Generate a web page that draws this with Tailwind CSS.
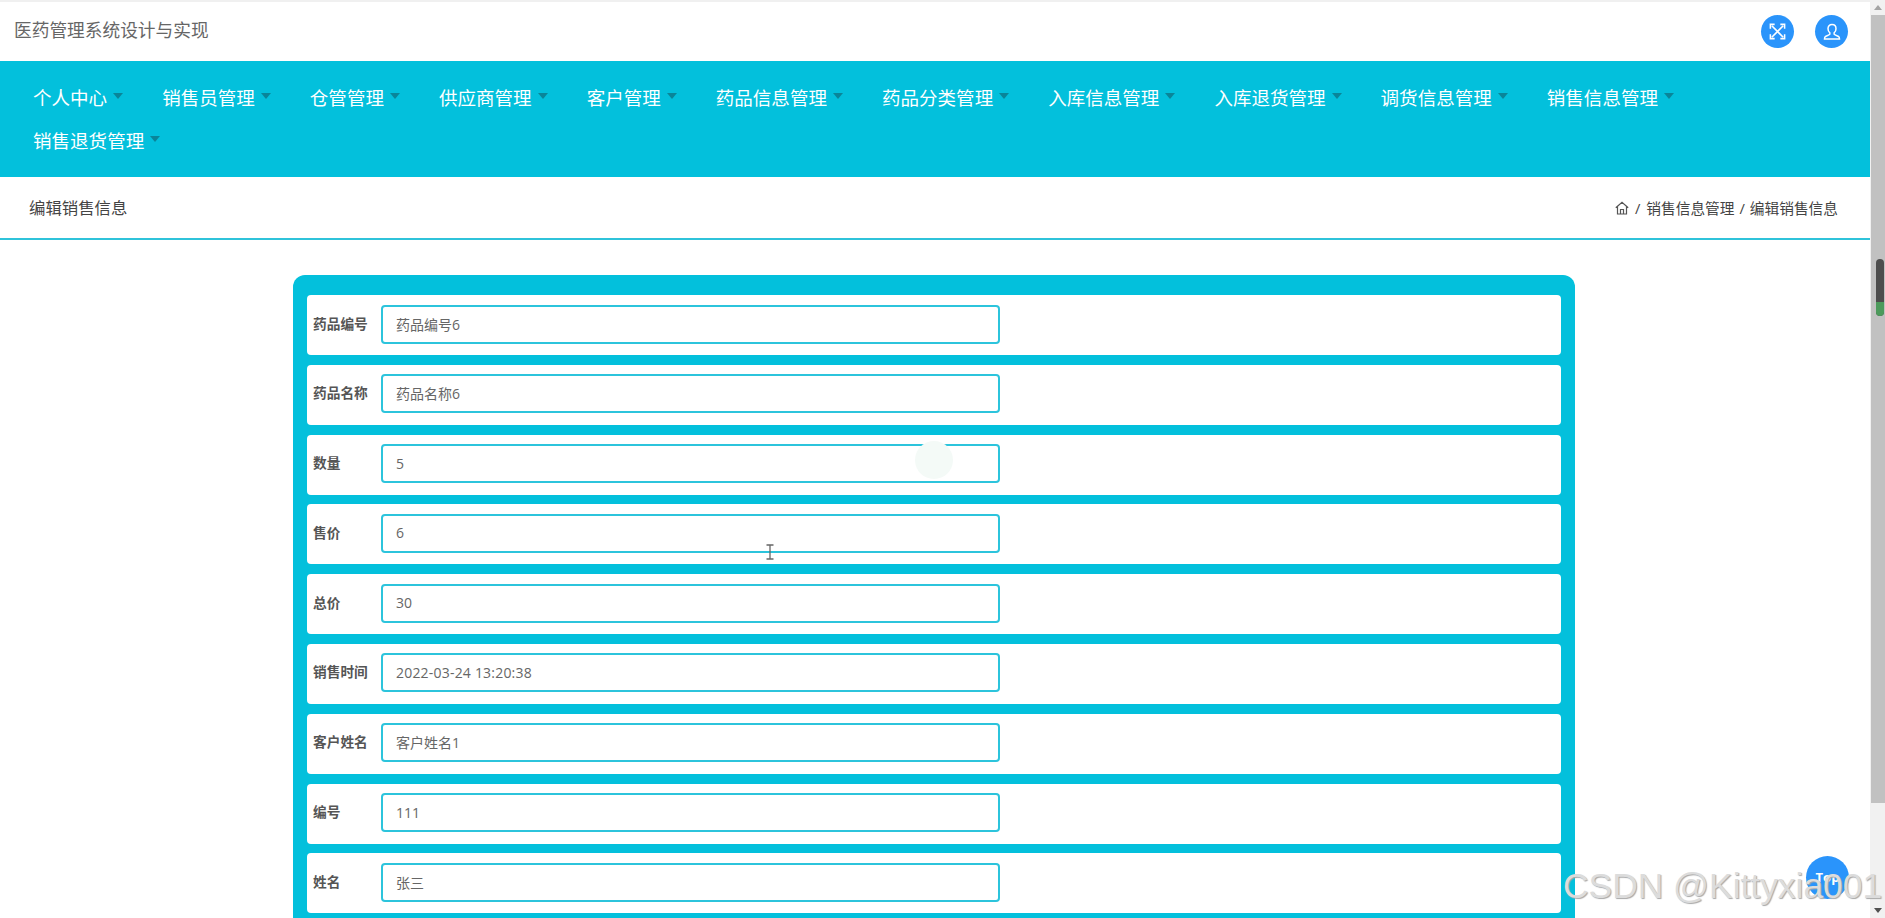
<!DOCTYPE html>
<html lang="zh-CN">
  <head>
    <meta charset="UTF-8" />
    <title>编辑销售信息</title>
    <script src="https://cdn.jsdelivr.net/npm/@tailwindcss/browser@4"></script>
  </head>
  <body class="bg-white font-['Open_Sans','Noto_Sans_CJK_SC',sans-serif]">
    <div class="relative flex h-[918px] overflow-hidden">
      <main class="flex-1 min-w-0">
        <!-- top bar -->
        <header class="h-[61px] border-t-2 border-[#f0f0f0] flex items-center justify-between pl-[14px] pr-[22px]">
          <span class="text-[17.7px] leading-[24px] mb-[3px] text-[#666]">医药管理系统设计与实现</span>
          <div class="flex items-center gap-[21px]">
            <button class="w-[33px] h-[33px] rounded-full bg-[#2a94fb] flex items-center justify-center">
              <svg class="w-[19px] h-[19px]" viewBox="0 0 20 20" fill="none" stroke="white" stroke-width="1.7">
                <path d="M4 4l12 12M16 4L4 16" />
                <path d="M2.5 7V2.5H7M13 2.5h4.5V7M2.5 13v4.5H7M17.5 13v4.5H13" stroke-width="1.6" />
              </svg>
            </button>
            <button class="w-[33px] h-[33px] rounded-full bg-[#2a94fb] flex items-center justify-center">
              <svg class="w-[20px] h-[20px]" viewBox="0 0 20 20" fill="none" stroke="white" stroke-width="1.5">
                <path d="M10 2.5c-2.6 0-4 1.9-4 4.2 0 1.800.8 3.300 1.900 4.200.3.900-.1 1.600-1 2L3.500 14.500c-.8.400-1 1-1 2.500h15c0-1.500-.2-2.100-1-2.500l-3.400-1.600c-.9-.4-1.300-1.100-1-2 1.100-.9 1.900-2.400 1.900-4.200 0-2.300-1.400-4.200-4-4.200z" />
              </svg>
            </button>
          </div>
        </header>

        <!-- main menu -->
        <nav class="h-[116px] bg-[#03c0dc] flex flex-wrap content-start gap-x-[39px] pt-[15px] pl-[33px] pr-[170px] text-[18.55px] leading-[43px] text-white">
          <a class="flex items-center">个人中心<i class="ml-[6px] mb-[3px] border-x-[5.5px] border-t-[6px] border-x-transparent border-t-[#0a8599]"></i></a>
          <a class="flex items-center">销售员管理<i class="ml-[6px] mb-[3px] border-x-[5.5px] border-t-[6px] border-x-transparent border-t-[#0a8599]"></i></a>
          <a class="flex items-center">仓管管理<i class="ml-[6px] mb-[3px] border-x-[5.5px] border-t-[6px] border-x-transparent border-t-[#0a8599]"></i></a>
          <a class="flex items-center">供应商管理<i class="ml-[6px] mb-[3px] border-x-[5.5px] border-t-[6px] border-x-transparent border-t-[#0a8599]"></i></a>
          <a class="flex items-center">客户管理<i class="ml-[6px] mb-[3px] border-x-[5.5px] border-t-[6px] border-x-transparent border-t-[#0a8599]"></i></a>
          <a class="flex items-center">药品信息管理<i class="ml-[6px] mb-[3px] border-x-[5.5px] border-t-[6px] border-x-transparent border-t-[#0a8599]"></i></a>
          <a class="flex items-center">药品分类管理<i class="ml-[6px] mb-[3px] border-x-[5.5px] border-t-[6px] border-x-transparent border-t-[#0a8599]"></i></a>
          <a class="flex items-center">入库信息管理<i class="ml-[6px] mb-[3px] border-x-[5.5px] border-t-[6px] border-x-transparent border-t-[#0a8599]"></i></a>
          <a class="flex items-center">入库退货管理<i class="ml-[6px] mb-[3px] border-x-[5.5px] border-t-[6px] border-x-transparent border-t-[#0a8599]"></i></a>
          <a class="flex items-center">调货信息管理<i class="ml-[6px] mb-[3px] border-x-[5.5px] border-t-[6px] border-x-transparent border-t-[#0a8599]"></i></a>
          <a class="flex items-center">销售信息管理<i class="ml-[6px] mb-[3px] border-x-[5.5px] border-t-[6px] border-x-transparent border-t-[#0a8599]"></i></a>
          <a class="flex items-center">销售退货管理<i class="ml-[6px] mb-[3px] border-x-[5.5px] border-t-[6px] border-x-transparent border-t-[#0a8599]"></i></a>
        </nav>

        <!-- breadcrumb -->
        <div class="h-[63px] border-b-2 border-[#2fc3da] flex items-center justify-between pl-[29px] pr-[32px]">
          <span class="text-[16.4px] leading-[24px] mt-[1px] text-[#444]">编辑销售信息</span>
          <div class="flex items-center mt-[1px] text-[14.7px] leading-[20px] text-[#444]">
            <svg class="w-[14px] h-[14px]" viewBox="0 0 14 14" fill="none" stroke="#555" stroke-width="1.2">
              <path d="M.8 6.800L7 1.200l6.200 5.600M2.500 5.500v7.500h9V5.500M5.500 13V8.500h3V13" />
            </svg>
            <span class="mx-[6px]">/</span>
            <span>销售信息管理</span>
            <span class="mx-[5px]">/</span>
            <span>编辑销售信息</span>
          </div>
        </div>

        <!-- form card -->
        <form class="w-[1282px] ml-[293px] mt-[35px] bg-[#03c0dc] rounded-[12px] px-[14px] pt-[20px] pb-[20px] flex flex-col gap-[9.8px]">
          <div class="h-[60px] bg-white rounded-[4px] flex items-center pl-[6px] pb-[2px]">
            <label class="w-[68px] text-[13.7px] leading-[20px] mb-[1px] font-bold text-[#555]">药品编号</label>
            <input class="w-[619px] h-[39px] border-2 border-[#2cc4dc] rounded-[4px] px-[13px] pb-[1px] text-[14px] text-[#666]" value="药品编号6" />
          </div>
          <div class="h-[60px] bg-white rounded-[4px] flex items-center pl-[6px] pb-[2px]">
            <label class="w-[68px] text-[13.7px] leading-[20px] mb-[1px] font-bold text-[#555]">药品名称</label>
            <input class="w-[619px] h-[39px] border-2 border-[#2cc4dc] rounded-[4px] px-[13px] pb-[1px] text-[14px] text-[#666]" value="药品名称6" />
          </div>
          <div class="h-[60px] bg-white rounded-[4px] flex items-center pl-[6px] pb-[2px]">
            <label class="w-[68px] text-[13.7px] leading-[20px] mb-[1px] font-bold text-[#555]">数量</label>
            <input class="w-[619px] h-[39px] border-2 border-[#2cc4dc] rounded-[4px] px-[13px] pb-[1px] text-[14px] text-[#666]" value="5" />
          </div>
          <div class="h-[60px] bg-white rounded-[4px] flex items-center pl-[6px] pb-[2px]">
            <label class="w-[68px] text-[13.7px] leading-[20px] mb-[1px] font-bold text-[#555]">售价</label>
            <input class="w-[619px] h-[39px] border-2 border-[#2cc4dc] rounded-[4px] px-[13px] pb-[1px] text-[14px] text-[#666]" value="6" />
          </div>
          <div class="h-[60px] bg-white rounded-[4px] flex items-center pl-[6px] pb-[2px]">
            <label class="w-[68px] text-[13.7px] leading-[20px] mb-[1px] font-bold text-[#555]">总价</label>
            <input class="w-[619px] h-[39px] border-2 border-[#2cc4dc] rounded-[4px] px-[13px] pb-[1px] text-[14px] text-[#666]" value="30" />
          </div>
          <div class="h-[60px] bg-white rounded-[4px] flex items-center pl-[6px] pb-[2px]">
            <label class="w-[68px] text-[13.7px] leading-[20px] mb-[1px] font-bold text-[#555]">销售时间</label>
            <input class="w-[619px] h-[39px] border-2 border-[#2cc4dc] rounded-[4px] px-[13px] pb-[1px] text-[14px] tracking-[0.2px] text-[#666]" value="2022-03-24 13:20:38" />
          </div>
          <div class="h-[60px] bg-white rounded-[4px] flex items-center pl-[6px] pb-[2px]">
            <label class="w-[68px] text-[13.7px] leading-[20px] mb-[1px] font-bold text-[#555]">客户姓名</label>
            <input class="w-[619px] h-[39px] border-2 border-[#2cc4dc] rounded-[4px] px-[13px] pb-[1px] text-[14px] text-[#666]" value="客户姓名1" />
          </div>
          <div class="h-[60px] bg-white rounded-[4px] flex items-center pl-[6px] pb-[2px]">
            <label class="w-[68px] text-[13.7px] leading-[20px] mb-[1px] font-bold text-[#555]">编号</label>
            <input class="w-[619px] h-[39px] border-2 border-[#2cc4dc] rounded-[4px] px-[13px] pb-[1px] text-[14px] text-[#666]" value="111" />
          </div>
          <div class="h-[60px] bg-white rounded-[4px] flex items-center pl-[6px] pb-[2px]">
            <label class="w-[68px] text-[13.7px] leading-[20px] mb-[1px] font-bold text-[#555]">姓名</label>
            <input class="w-[619px] h-[39px] border-2 border-[#2cc4dc] rounded-[4px] px-[13px] pb-[1px] text-[14px] text-[#666]" value="张三" />
          </div>
        </form>
      </main>

      <!-- browser scrollbar -->
      <aside class="w-[15px] shrink-0 bg-[#f1f1f1] flex flex-col">
        <div class="h-[15px] flex items-center justify-center">
          <i class="border-x-[4px] border-b-[5px] border-x-transparent border-b-[#a3a3a3]"></i>
        </div>
        <div class="h-[788px] ml-[1px] bg-[#c1c1c1]"></div>
        <div class="flex-1 flex items-end justify-center pb-[5px]">
          <i class="border-x-[4px] border-t-[5px] border-x-transparent border-t-[#505050]"></i>
        </div>
      </aside>

      <!-- overlays: page scroll widget, mouse ripple, text cursor, back to top, watermark -->
      <div class="absolute left-[1876px] top-[259px] w-[8px] h-[57px] rounded-full bg-[#4d4d4d] overflow-hidden flex items-end">
        <div class="w-full h-[14px] bg-[#4d9a5c]"></div>
      </div>
      <div class="absolute left-[915px] top-[441px] w-[38px] h-[38px] rounded-full bg-[#f4faf7]"></div>
      <svg class="absolute left-[766px] top-[544px] w-[8px] h-[16px]" viewBox="0 0 8 16" fill="none" stroke="#666" stroke-width="1.300">
        <path d="M.5 1h7M.5 15h7M4 1v14" />
      </svg>
      <button class="absolute left-[1806px] top-[856px] w-[43px] h-[43px] rounded-full bg-[#2a94fb] text-white text-[13px] font-bold">Top</button>
      <div class="absolute left-[1563px] top-[866px] font-['Liberation_Sans',sans-serif] text-[35.4px] leading-[40px] whitespace-nowrap text-[#dcdcdc] [text-shadow:1px_1px_1px_#a8a8a8]">CSDN @Kittyxia001</div>
    </div>
  </body>
</html>
